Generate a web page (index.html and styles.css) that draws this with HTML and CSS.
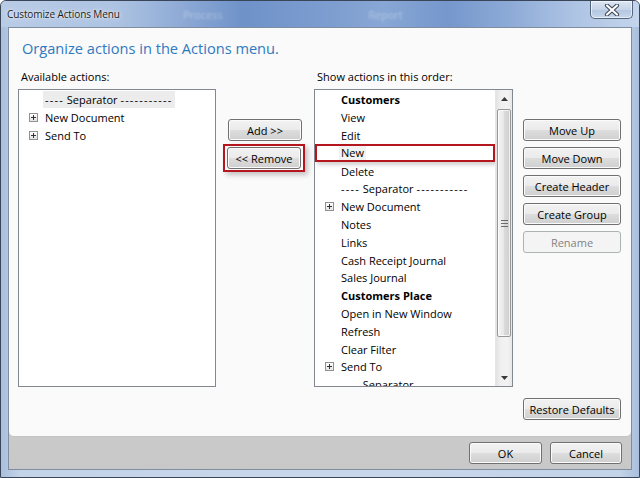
FILE: index.html
```html
<!DOCTYPE html>
<html>
<head>
<meta charset="utf-8">
<link rel="stylesheet" href="styles.css">
</head>
<body>
<div class="window">
  <div class="titlebar">
    <span class="title">Customize Actions Menu</span>
    <span class="ghost ghost-1">Process</span>
    <span class="ghost ghost-2">Report</span>
    <div class="close">
      <svg width="16" height="12" viewBox="0 0 16 12"><path d="M3 1.5 L13 10.5 M13 1.5 L3 10.5" stroke="#3b4656" stroke-width="4.2" stroke-linecap="round"/><path d="M3 1.5 L13 10.5 M13 1.5 L3 10.5" stroke="#ffffff" stroke-width="2.2" stroke-linecap="round"/></svg>
    </div>
  </div>
  <div class="client">
    <div class="panel">
      <h1 class="instruction">Organize actions in the Actions menu.</h1>
      <div class="grid">
        <div class="label col-1">Available actions:</div>
        <div class="label col-3">Show actions in this order:</div>

        <div class="listbox left-list">
          <div class="items">
            <div class="row"><span class="slot"></span><span class="sel"><span class="dash">----</span> Separator <span class="dash">-----------</span></span></div>
            <div class="row"><span class="slot"><span class="exp"></span></span><span>New Document</span></div>
            <div class="row"><span class="slot"><span class="exp"></span></span><span>Send To</span></div>
          </div>
        </div>

        <div class="mid-buttons">
          <button class="btn">Add &gt;&gt;</button>
          <span class="callout"><button class="btn">&lt;&lt; Remove</button></span>
        </div>

        <div class="listbox right-list">
          <div class="items">
            <div class="row"><span class="slot"></span><span class="bold">Customers</span></div>
            <div class="row"><span class="slot"></span><span>View</span></div>
            <div class="row"><span class="slot"></span><span>Edit</span></div>
            <div class="row marked"><span class="slot"></span><span class="sel-faint">New</span></div>
            <div class="row"><span class="slot"></span><span>Delete</span></div>
            <div class="row"><span class="slot"></span><span><span class="dash">----</span> Separator <span class="dash">-----------</span></span></div>
            <div class="row"><span class="slot"><span class="exp"></span></span><span>New Document</span></div>
            <div class="row"><span class="slot"></span><span>Notes</span></div>
            <div class="row"><span class="slot"></span><span>Links</span></div>
            <div class="row"><span class="slot"></span><span>Cash Receipt Journal</span></div>
            <div class="row"><span class="slot"></span><span>Sales Journal</span></div>
            <div class="row"><span class="slot"></span><span class="bold">Customers Place</span></div>
            <div class="row"><span class="slot"></span><span>Open in New Window</span></div>
            <div class="row"><span class="slot"></span><span>Refresh</span></div>
            <div class="row"><span class="slot"></span><span>Clear Filter</span></div>
            <div class="row"><span class="slot"><span class="exp"></span></span><span>Send To</span></div>
            <div class="row"><span class="slot"></span><span><span class="dash">----</span> Separator <span class="dash">-----------</span></span></div>
          </div>
          <div class="vscroll">
            <div class="arrow">
              <svg width="7" height="4" viewBox="0 0 7 4"><path d="M0 4 L3.5 0 L7 4 Z" fill="#3a3a3a"/></svg>
            </div>
            <div class="thumb"><span class="grip"></span></div>
            <div class="track"></div>
            <div class="arrow">
              <svg width="7" height="4" viewBox="0 0 7 4"><path d="M0 0 L7 0 L3.5 4 Z" fill="#3a3a3a"/></svg>
            </div>
          </div>
        </div>

        <div class="side-buttons">
          <button class="btn wide">Move Up</button>
          <button class="btn wide">Move Down</button>
          <button class="btn wide">Create Header</button>
          <button class="btn wide">Create Group</button>
          <button class="btn wide disabled">Rename</button>
        </div>

        <button class="btn wide restore">Restore Defaults</button>
      </div>
    </div>
    <div class="bar">
      <button class="btn ok">OK</button>
      <button class="btn cancel">Cancel</button>
    </div>
  </div>
</div>
</body>
</html>
```

FILE: styles.css
```css
* { box-sizing: border-box; }

html, body {
  margin: 0;
  padding: 0;
  background: #ffffff;
}

body {
  font-family: "Open Sans", "Noto Sans", "DejaVu Sans", sans-serif;
  font-size: 11px;
  color: #000;
}

.window {
  width: 640px;
  height: 478px;
  display: flex;
  flex-direction: column;
  padding: 0 7px 7px 7px;
  border: 1px solid #3a4658;
  border-radius: 6px 6px 0 0;
  background:
    linear-gradient(90deg, #a9bfdc 0%, #c3d3e8 3%, #c9d7ea 50%, #c3d3e8 97%, #a9bfdc 100%);
  overflow: hidden;
}

.titlebar {
  height: 26px;
  margin: 0 -7px;
  padding-left: 6px;
  display: flex;
  align-items: center;
  position: relative;
  background: linear-gradient(90deg, #b9cce6 0%, #adc3e2 18%, #8fabd6 28%, #6e92c9 38%, #7e9ed0 52%, #88a7d5 60%, #7597cc 70%, #8eabd7 80%, #aec4e4 90%, #c4d5ec 100%);
}

.title {
  font-size: 10px;
  letter-spacing: -0.1px;
  color: #1b1b1b;
  text-shadow: 0 0 5px rgba(255,255,255,0.9), 0 0 2px rgba(255,255,255,0.8);
}

.ghost {
  position: absolute;
  top: 6px;
  font-size: 11px;
  color: rgba(255,255,255,0.35);
  filter: blur(1.2px);
}
.ghost-1 { left: 182px; }
.ghost-2 { left: 367px; }

.close {
  margin-left: auto;
  margin-right: 6px;
  align-self: flex-start;
  width: 43px;
  height: 18px;
  display: flex;
  align-items: center;
  justify-content: center;
  border: 1px solid #55657c;
  border-top: none;
  border-radius: 0 0 5px 5px;
  background: linear-gradient(#dde6f2, #c6d4e8 50%, #b3c6e0 51%, #c7d6ea);
  box-shadow: inset 0 0 0 1px rgba(255,255,255,0.6);
}

.client {
  flex: 1;
  display: flex;
  flex-direction: column;
  border: 1px solid #7f8da1;
  background: linear-gradient(#e4e4e4, #d6d6d6 40%, #c8c8c8);
}

.panel {
  height: 409px;
  background: #fafafa;
  border-bottom: 1px solid #c3c3c3;
  border-radius: 0 0 5px 5px;
  padding: 10px 0 0 9px;
}

.instruction {
  margin: 0;
  padding-left: 4px;
  font-size: 14.6px;
  line-height: 20px;
  font-weight: normal;
  color: #2f79bf;
}

.grid {
  margin-top: 11px;
  display: grid;
  grid-template-columns: 210px 86px 209px 98px;
  grid-template-rows: 20px 298px auto;
}

.label {
  padding-left: 3px;
  line-height: 15px;
  white-space: nowrap;
}
.col-1 { grid-column: 1; grid-row: 1; }
.col-3 { grid-column: 3; grid-row: 1; }

.listbox {
  grid-row: 2;
  border: 1px solid #828790;
  background: #fff;
  display: flex;
  overflow: hidden;
}
.left-list { grid-column: 1; width: 198px; }
.right-list { grid-column: 3; width: 199px; }

.items {
  flex: 1;
  min-width: 0;
  padding-top: 1px;
  overflow: hidden;
}

.row {
  height: 17.8px;
  display: flex;
  align-items: center;
  white-space: nowrap;
}

.slot {
  width: 26px;
  flex: none;
  display: flex;
  align-items: center;
  padding-left: 10px;
}

.exp {
  width: 9px;
  height: 9px;
  border: 1px solid #919191;
  background:
    linear-gradient(#333, #333) center / 5px 1px no-repeat,
    linear-gradient(#333, #333) center / 1px 5px no-repeat,
    linear-gradient(#ffffff, #e3e3e3);
}

.dash { letter-spacing: 1.2px; }

.sel {
  display: inline-block;
  background: #ececec;
  margin-left: -2px;
  padding: 0 2px 0 2px;
  line-height: 17px;
}

.sel-faint {
  background: #f2f2f2;
  margin-left: -2px;
  padding: 0 2px;
  line-height: 14px;
}

.bold { font-weight: bold; }

.row.marked {
  outline: 2px solid #b5161d;
  outline-offset: -2px;
  box-shadow: 2px 3px 4px rgba(0,0,0,0.18);
  position: relative;
}

.vscroll {
  width: 17px;
  flex: none;
  display: flex;
  flex-direction: column;
  background: linear-gradient(90deg, #e2e2e2, #f0f0f0 30%, #f3f3f3 70%, #e8e8e8);
  border-left: 1px solid #e6e6e6;
}

.arrow {
  height: 17px;
  flex: none;
  display: flex;
  align-items: center;
  justify-content: center;
}

.thumb {
  height: 228px;
  margin: 2px 1px 0 1px;
  border: 1px solid #979797;
  border-radius: 2px;
  background: linear-gradient(90deg, #f4f4f4, #e9e9e9 45%, #d9d9d9 55%, #cfcfcf);
  box-shadow: inset 0 0 0 1px rgba(255,255,255,0.7);
  display: flex;
  align-items: center;
  justify-content: center;
}

.grip {
  width: 7px;
  height: 7px;
  background: repeating-linear-gradient(#6b6b6b 0 1px, transparent 1px 3px);
}

.track { flex: 1; }

.mid-buttons {
  grid-column: 2;
  grid-row: 2;
  padding-top: 30px;
  display: flex;
  flex-direction: column;
  align-items: flex-start;
  gap: 7px;
}

.btn {
  height: 22px;
  width: 74px;
  padding: 0;
  font: inherit;
  color: #000;
  border: 1px solid #707070;
  border-radius: 3px;
  background: linear-gradient(#f2f2f2 0%, #ebebeb 48%, #dddddd 52%, #cfcfcf 100%);
  box-shadow: inset 0 0 0 1px #fbfbfb;
  white-space: nowrap;
}

.btn.wide { width: 98px; }

.btn.disabled {
  border-color: #adb2b5;
  background: #f4f4f4;
  box-shadow: none;
  color: #838383;
}

.callout {
  display: block;
  margin: -4px 0 0 -5px;
  padding: 1px 2px 1px 2px;
  border: 2px solid #b5161d;
  box-shadow: 3px 3px 5px rgba(0,0,0,0.22);
}
.callout .btn { display: block; }

.side-buttons {
  grid-column: 4;
  grid-row: 2;
  padding-top: 30px;
  display: flex;
  flex-direction: column;
  gap: 6px;
}

.restore {
  grid-column: 4;
  grid-row: 3;
  margin-top: 11px;
}

.bar {
  flex: 1;
  display: flex;
  justify-content: flex-end;
  align-items: flex-start;
  padding: 5px 9px 0 0;
  gap: 8px;
}

.btn.ok { width: 73px; }
.btn.cancel { width: 72px; }
```
